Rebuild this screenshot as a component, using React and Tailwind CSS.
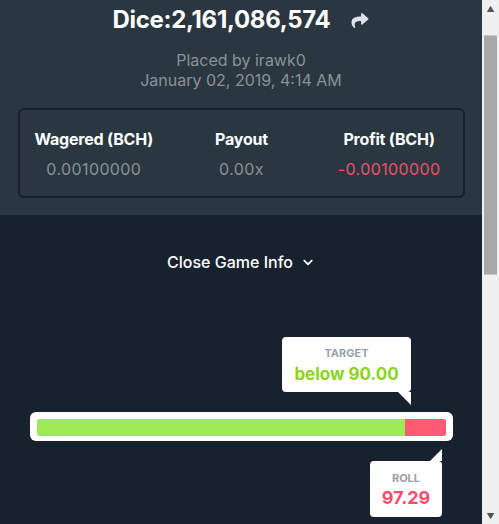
import { FaShare, FaChevronDown } from 'react-icons/fa'

const font = { fontFamily: 'Inter, "Liberation Sans", sans-serif' }

const Stat = ({ label, value, tone }) => (
  <div className="flex flex-col items-center gap-[10px]">
    <p className="text-[16px] leading-5 font-bold text-white tracking-[-0.2px]">{label}</p>
    <p className={`text-[16px] leading-5 tracking-[0.4px] ${tone}`}>{value}</p>
  </div>
)

export default function App() {
  return (
    <div className="flex w-[499px] h-[524px] overflow-hidden bg-[#17222e]" style={font}>
      <div className="flex-1 flex flex-col min-w-0">
        {/* game header */}
        <div className="bg-[#2a3640] pt-[6px] pb-[17px]">
          <div className="flex items-center justify-center gap-[19px]">
            <h1 className="text-[24px] leading-7 font-bold text-white tracking-[-0.3px]">Dice:2,161,086,574</h1>
            <FaShare className="text-[#dde2ef] w-[20px] h-[17px]" />
          </div>
          <div className="mt-4 text-center text-[16px] leading-5 text-[#8a9299]">
            <p>Placed by irawk0</p>
            <p>January 02, 2019, 4:14 AM</p>
          </div>
          <div className="mt-[18px] ml-[18px] mr-[17px] h-[90px] rounded-md border-2 border-[#18212a] grid grid-cols-3 pt-[19px]">
            <Stat label="Wagered (BCH)" value="0.00100000" tone="text-[#8a9299]" />
            <Stat label="Payout" value="0.00x" tone="text-[#8a9299]" />
            <Stat label="Profit (BCH)" value="-0.00100000" tone="text-[#f0506e]" />
          </div>
        </div>

        {/* result */}
        <div className="flex-1 pt-[37px]">
          <button className="mx-auto flex items-center gap-[8px] text-white text-[16px] leading-5 font-medium">
            Close Game Info
            <FaChevronDown className="w-[14px] h-[11px]" />
          </button>

          <div className="relative ml-[30px] w-[423px] mt-[140px] h-[29px] bg-white rounded-[6px] p-[7px] flex">
            <div className="h-[17px] w-[368px] bg-[#9eea55] rounded-l-[2px]" />
            <div className="h-[17px] flex-1 bg-[#ff5a74] rounded-r-[2px]" />

            <div className="absolute left-[252px] bottom-[49px] w-[129px] h-[55px] bg-white rounded-[4px] flex flex-col items-center pt-[10px]">
              <span className="text-[11px] leading-[13px] font-bold text-[#9aa0ab]">TARGET</span>
              <span className="text-[17px] leading-[22px] font-bold text-[#8ad419] mt-[3px]">below 90.00</span>
              <svg className="absolute right-0 top-full" width="13" height="13" viewBox="0 0 13 13">
                <polygon points="0,0 13,0 13,13" fill="#fff" />
              </svg>
            </div>

            <div className="absolute left-[340px] top-[49px] w-[72px] h-[56px] bg-white rounded-[4px] flex flex-col items-center pt-[11px]">
              <span className="text-[11px] leading-[13px] font-bold text-[#9aa0ab]">ROLL</span>
              <span className="text-[18px] leading-[22px] font-bold text-[#f0506e] mt-[2px]">97.29</span>
              <svg className="absolute right-0 bottom-full" width="12" height="12" viewBox="0 0 12 12">
                <polygon points="0,12 12,0 12,12" fill="#fff" />
              </svg>
            </div>
          </div>
        </div>
      </div>

      {/* scrollbar */}
      <div className="w-[17px] bg-[#f0f0f0] flex flex-col items-center">
        <span className="h-[17px] flex items-center justify-center text-[#505050] text-[8px] leading-none">▲</span>
        <div className="mt-[18px] w-[13px] h-[240px] bg-[#a8a8a8] border-y border-[#c8c8c8]" />
        <span className="mt-auto h-[17px] flex items-center justify-center text-[#505050] text-[8px] leading-none">▼</span>
      </div>
    </div>
  )
}
